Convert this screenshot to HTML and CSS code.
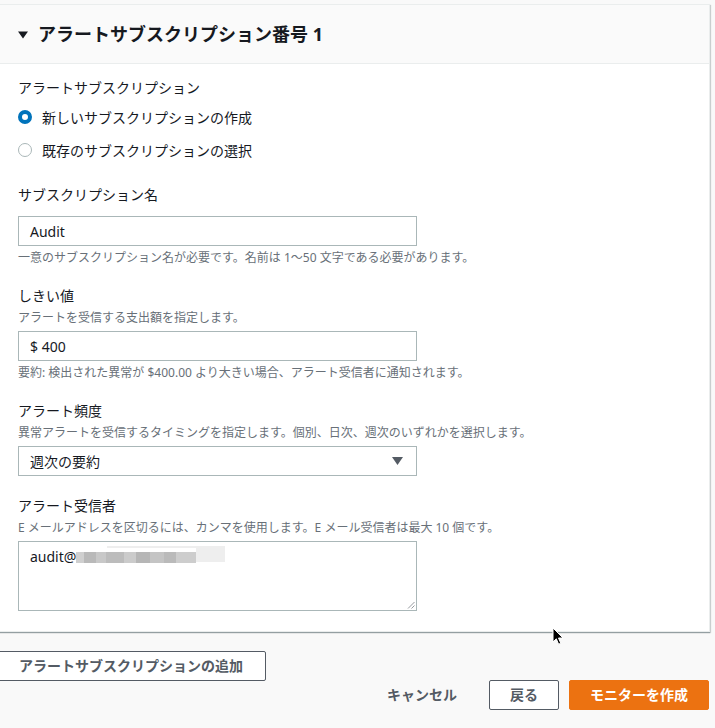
FILE: index.html
```html
<!DOCTYPE html>
<html lang="ja">
<head>
<meta charset="utf-8">
<title>アラートサブスクリプション</title>
<link rel="stylesheet" href="styles.css">
</head>
<body>
<div class="page">
  <section class="card">
    <header class="card-header">
      <svg class="caret" width="10" height="8" viewBox="0 0 10 8"><path d="M0 0.5 H10 L5 7.5 Z" fill="#16191f"/></svg>
      <h2 class="card-title">アラートサブスクリプション番号 1</h2>
    </header>
    <div class="card-body">
      <div class="field field-radio">
        <div class="label">アラートサブスクリプション</div>
        <div class="radio-group">
          <div class="radio-row"><span class="radio radio-on"></span><span>新しいサブスクリプションの作成</span></div>
          <div class="radio-row"><span class="radio"></span><span>既存のサブスクリプションの選択</span></div>
        </div>
      </div>

      <div class="field">
        <div class="label label-tight">サブスクリプション名</div>
        <div class="input">Audit</div>
        <div class="hint">一意のサブスクリプション名が必要です。名前は 1〜50 文字である必要があります。</div>
      </div>

      <div class="field">
        <div class="label">しきい値</div>
        <div class="desc">アラートを受信する支出額を指定します。</div>
        <div class="input">$ 400</div>
        <div class="hint">要約: 検出された異常が $400.00 より大きい場合、アラート受信者に通知されます。</div>
      </div>

      <div class="field field-select">
        <div class="label">アラート頻度</div>
        <div class="desc">異常アラートを受信するタイミングを指定します。個別、日次、週次のいずれかを選択します。</div>
        <div class="input select">
          <span>週次の要約</span>
          <svg width="11" height="8" viewBox="0 0 11 8"><path d="M0 0 H11 L5.5 8 Z" fill="#545b64"/></svg>
        </div>
      </div>

      <div class="field">
        <div class="label">アラート受信者</div>
        <div class="desc">E メールアドレスを区切るには、カンマを使用します。E メール受信者は最大 10 個です。</div>
        <div class="textarea">
          <span>audit@</span><span class="blur"></span>
          <svg class="grip" width="8" height="8" viewBox="0 0 8 8"><path d="M7.5 1 L1 7.5 M7.5 4.5 L4.5 7.5" stroke="#8a8f94" stroke-width="0.9" fill="none"/></svg>
        </div>
      </div>
    </div>
  </section>

  <div class="add-row">
    <button class="btn btn-add">アラートサブスクリプションの追加</button>
  </div>

  <div class="actions">
    <button class="btn btn-link">キャンセル</button>
    <button class="btn btn-normal">戻る</button>
    <button class="btn btn-primary">モニターを作成</button>
  </div>

  <svg class="cursor" width="12" height="19" viewBox="0 0 12 19"><path d="M1 1 V15 L4.3 11.8 L6.6 17.2 L8.8 16.3 L6.5 11 H11 Z" fill="#000" stroke="#fff" stroke-width="1"/></svg>
</div>
</body>
</html>
```

FILE: styles.css
```css
* { box-sizing: border-box; }

html, body {
  margin: 0;
  padding: 0;
  background: #f9f9f9;
  font-family: "Noto Sans", "Noto Sans CJK JP", sans-serif;
  color: #16191f;
  overflow: hidden;
}

.page {
  position: relative;
  width: 715px;
  height: 728px;
  padding-top: 4px;
}

.card {
  margin: 0 5px 0 -2px;
  background: #fff;
  border: 1px solid #eaeded;
  border-left: none;
  box-shadow: 0 1px 1px 0 rgba(0, 28, 36, 0.3), 1px 1px 1px 0 rgba(0, 28, 36, 0.15);
}

.card-header {
  height: 59px;
  background: #fafafa;
  border-bottom: 1px solid #eaeded;
  display: flex;
  align-items: center;
  padding-left: 20px;
}

.caret { margin-right: 10px; margin-top: 1px; }

.card-title {
  margin: 0;
  font-size: 18px;
  font-weight: 700;
  line-height: 24px;
}

.card-body {
  padding: 14px 20px 20px 20px;
}

.field { margin-bottom: 19px; }
.field:last-child { margin-bottom: 0; }
.field-radio { margin-bottom: 23px; }
.field-select { margin-bottom: 20px; }

.label {
  font-size: 14px;
  line-height: 20px;
  margin-bottom: 3px;
}
.label-tight { margin-bottom: 11px; }

.radio-group {
  display: flex;
  flex-direction: column;
  gap: 9px;
  margin-top: 7px;
}

.radio-row {
  display: flex;
  align-items: center;
  height: 24px;
  font-size: 14px;
}

.radio {
  width: 14px;
  height: 14px;
  border-radius: 50%;
  border: 1px solid #aab7b8;
  background: #fff;
  margin-right: 10px;
  flex: none;
}
.radio-on {
  border: 4px solid #0073bb;
}

.desc {
  font-size: 12px;
  line-height: 18px;
  color: #687078;
  margin-bottom: 4px;
}

.hint {
  font-size: 12px;
  line-height: 18px;
  color: #687078;
  margin-top: 3px;
}

.input {
  width: 399px;
  height: 30px;
  border: 1px solid #aab7b8;
  background: #fff;
  padding: 0 11px;
  display: flex;
  align-items: center;
  font-size: 14px;
}

.select {
  justify-content: space-between;
  padding-right: 13px;
}

.textarea {
  position: relative;
  width: 399px;
  height: 70px;
  border: 1px solid #aab7b8;
  background: #fff;
  padding: 5px 11px;
  font-size: 14px;
  line-height: 20px;
}

.blur {
  display: inline-block;
  vertical-align: top;
  margin-top: 1px;
  width: 120px;
  height: 18px;
  background:
    linear-gradient(90deg,
      #cfcfcf 0 8px, #b9b9b9 8px 20px, #c8c8c8 20px 30px, #bcbcbc 30px 48px,
      #cbcbcb 48px 60px, #b6b6b6 60px 74px, #c4c4c4 74px 88px, #bababa 88px 100px,
      #cdcdcd 100px 120px);
  background-size: 120px 11px;
  background-repeat: no-repeat;
  background-position: 0 4px;
  box-shadow: 30px -3px 0 -1px #eeeeee;
}

.grip {
  position: absolute;
  right: 1px;
  bottom: 1px;
}

.add-row {
  margin-top: 19px;
}

.btn {
  font-family: inherit;
  font-size: 14px;
  font-weight: 700;
  height: 30px;
  padding: 0 20px;
  border: 1px solid #545b64;
  background: #fff;
  color: #545b64;
  cursor: pointer;
  border-radius: 2px;
  line-height: 20px;
}

.btn-add {
  margin-left: -3px;
  padding: 0 22px 0 21px;
  height: 30px;
}

.actions {
  display: flex;
  justify-content: flex-end;
  align-items: center;
  gap: 10px;
  padding-right: 6px;
  margin-top: -1px;
}

.btn-link {
  border-color: transparent;
  background: transparent;
  padding: 0 21px 0 20px;
}

.btn-primary {
  background: #ec7211;
  border-color: #ec7211;
  color: #fff;
}

.cursor {
  position: absolute;
  left: 552px;
  top: 627px;
}
```
